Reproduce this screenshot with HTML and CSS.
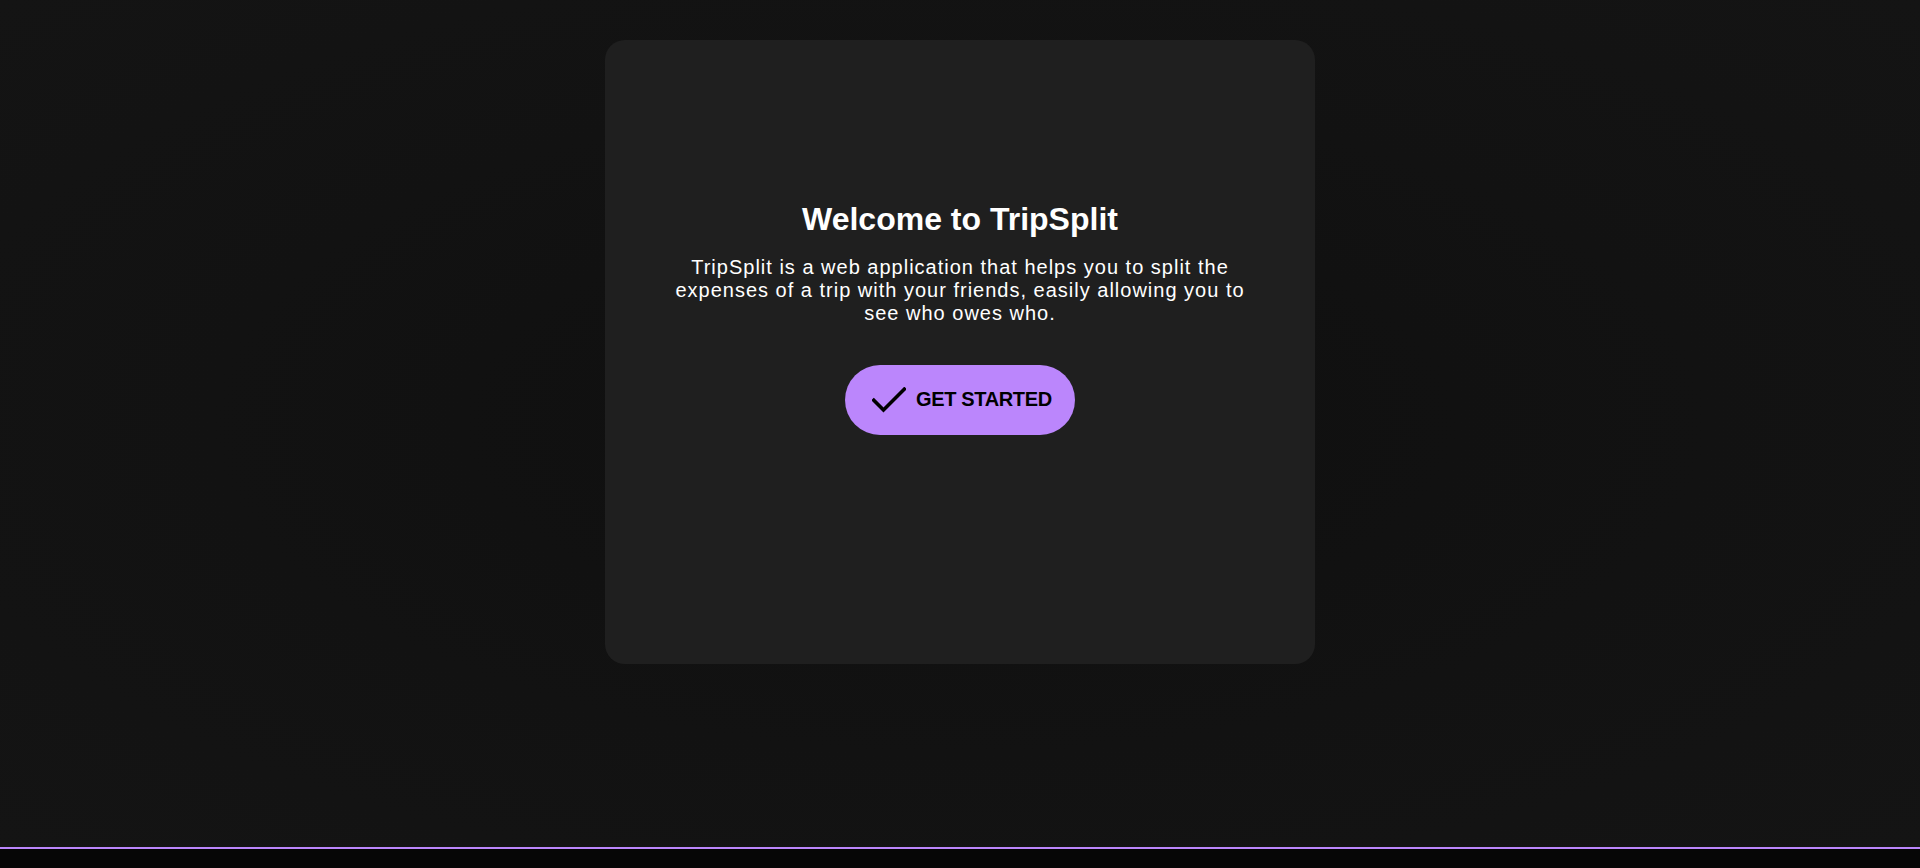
FILE: index.html
```html
<!DOCTYPE html>
<html lang="en">
<head>
<meta charset="utf-8">
<title>TripSplit</title>
<link rel="stylesheet" href="styles.css">
</head>
<body>
<main class="page">
  <section class="card">
    <h1 class="title">Welcome to TripSplit</h1>
    <p class="intro">TripSplit is a web application that helps you to split the expenses of a trip with your friends, easily allowing you to see who owes who.</p>
    <button class="cta" type="button">
      <svg class="cta-icon" width="34" height="26" viewBox="0 0 34 26" aria-hidden="true">
        <polyline points="1.8,13.2 11.5,23 32.3,2.2" fill="none" stroke="#000" stroke-width="3.6" stroke-linecap="square"/>
      </svg>
      <span class="cta-label">GET STARTED</span>
    </button>
  </section>
</main>
<footer class="footer"></footer>
</body>
</html>
```

FILE: styles.css
```css
* {
  box-sizing: border-box;
}

html, body {
  margin: 0;
  padding: 0;
  height: 100%;
}

body {
  display: flex;
  flex-direction: column;
  font-family: "Liberation Sans", Arial, sans-serif;
  background: #121212;
  color: #fff;
}

.page {
  flex: 1;
  display: flex;
  justify-content: center;
  align-items: flex-start;
  padding-top: 40px;
  background: radial-gradient(ellipse at 50% 50%, #0f0f0f 0%, #121212 55%, #141414 100%);
}

.card {
  width: 710px;
  height: 624px;
  background: #1f1f1f;
  border-radius: 20px;
  padding: 161px 60px 0;
  display: flex;
  flex-direction: column;
  align-items: center;
  text-align: center;
}

.title {
  margin: 0;
  font-size: 32px;
  font-weight: 700;
  line-height: 37px;
  color: #fff;
}

.intro {
  margin: 18px 0 0;
  width: 590px;
  font-size: 20px;
  line-height: 23px;
  letter-spacing: 1px;
  color: #fff;
}

.cta {
  margin-top: 40px;
  width: 230px;
  height: 70px;
  border: none;
  border-radius: 35px;
  background: #bb86fc;
  display: flex;
  align-items: center;
  padding: 0 0 2px 27px;
  gap: 10px;
  font-family: "Liberation Sans", Arial, sans-serif;
  cursor: pointer;
}

.cta-icon {
  display: block;
  flex: none;
  margin-top: 2px;
}

.cta-label {
  font-size: 20px;
  font-weight: 700;
  color: #000;
  line-height: 23px;
  letter-spacing: -0.35px;
}

.footer {
  flex: none;
  height: 21px;
  border-top: 2px solid #bb86fc;
  background: #060606;
}
```
